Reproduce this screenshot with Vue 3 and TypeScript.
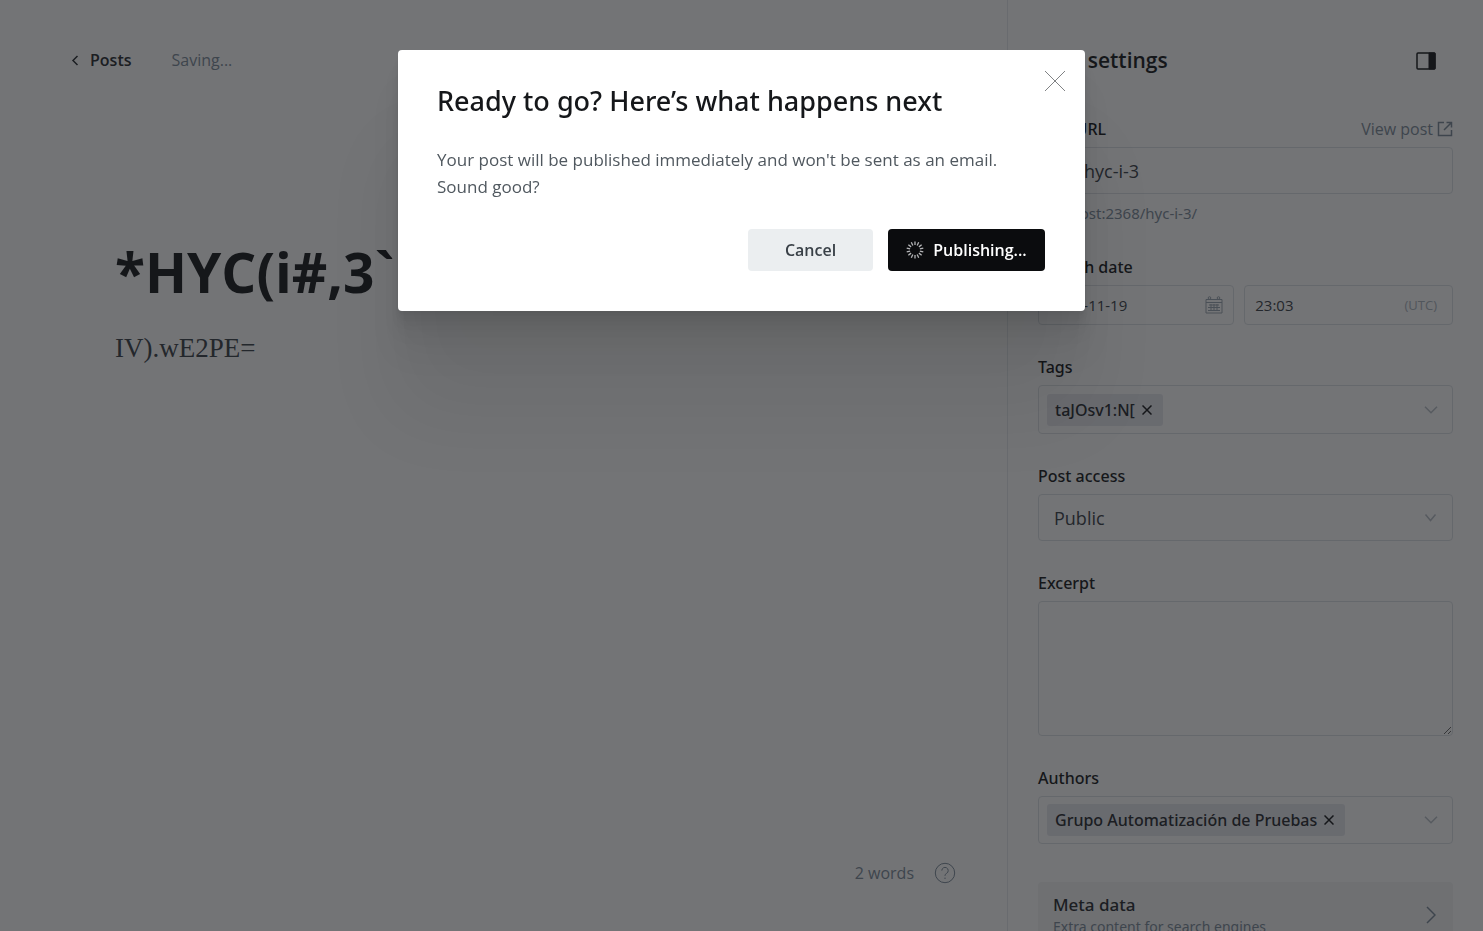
<script setup lang="ts">
import { ref } from 'vue'

const slug = ref('hyc-i-3')
const date = ref('2023-11-19')
const time = ref('23:03')
const access = ref('Public')
const excerpt = ref('')
const tags = ref<string[]>(['taJOsv1:N['])
const authors = ref<string[]>(['Grupo Automatización de Pruebas'])
const spokes = Array.from({ length: 14 }, (_, i) => (i * 360) / 14)
</script>

<template>
  <div class="app">
    <main class="editor">
      <header class="topbar">
        <a class="back" href="#">
          <svg width="8" height="12" viewBox="0 0 8 12"><path d="M6.500 2 2 6.500 6.500 11" /></svg>
          Posts
        </a>
        <span class="status">Saving...</span>
      </header>
      <article class="content">
        <h1>*HYC(i#,3`</h1>
        <p>IV).wE2PE=</p>
      </article>
      <footer class="bottombar">
        <span>2 words</span>
        <a href="#" aria-label="Help">
          <svg width="22" height="22" viewBox="0 0 22 22">
            <circle cx="11" cy="11" r="9.700" />
            <path d="M7.800 8.600a3.200 3.200 0 1 1 4.900 2.700c-1.100.7-1.700 1.200-1.700 2.500" />
            <path d="M11 15.600v1.400" />
          </svg>
        </a>
      </footer>
    </main>

    <aside class="settings">
      <div class="settings-head">
        <h2>Post settings</h2>
        <button type="button" class="icon-button" aria-label="Toggle settings">
          <svg width="20" height="18" viewBox="0 0 20 18">
            <rect x="1" y="1" width="18" height="16" rx="1" fill="none" stroke="#15171a" stroke-width="1.500" />
            <path d="M13 1h6v16h-6z" fill="#15171a" />
          </svg>
        </button>
      </div>

      <div class="group">
        <div class="label-row">
          <label for="slug">Post URL</label>
          <a class="view" href="#">
            View post
            <svg width="16" height="16" viewBox="0 0 16 16">
              <path d="M7 1.500H1.500v13h13V9" />
              <path d="M9.500 1.500h5v5M14.500 1.500 7 9" />
            </svg>
          </a>
        </div>
        <input id="slug" v-model="slug" class="box slug" type="text" />
        <p class="hint">localhost:2368/hyc-i-3/</p>
      </div>

      <div class="group">
        <label for="date">Publish date</label>
        <div class="date-row">
          <div class="box small date">
            <input id="date" v-model="date" type="text" />
            <svg width="18" height="18" viewBox="0 0 18 18">
              <path d="M1 3.500h16v13.500H1zM1 6.500h16M4 9h10M3 11.500h12M3 14.500h12M6 8v7M9 8v7M12 8v7" />
              <circle cx="4.500" cy="2" r="1.300" />
              <circle cx="13.500" cy="2" r="1.300" />
            </svg>
          </div>
          <div class="box small time">
            <input v-model="time" type="text" aria-label="Publish time" />
            <span class="utc">(UTC)</span>
          </div>
        </div>
      </div>

      <div class="group">
        <span class="label">Tags</span>
        <div class="box multi tall">
          <span v-for="tag in tags" :key="tag" class="token">
            {{ tag }}
            <button type="button" :aria-label="'Remove ' + tag">
              <svg width="10" height="10" viewBox="0 0 10 10"><path d="M.5.500l9 9M9.500.500l-9 9" /></svg>
            </button>
          </span>
          <svg class="chevron" width="14" height="8" viewBox="0 0 14 8"><path d="M1 .8l6 6 6-6" /></svg>
        </div>
      </div>

      <div class="group">
        <label for="access">Post access</label>
        <div class="box select">
          <select id="access" v-model="access">
            <option>Public</option>
          </select>
          <svg class="chevron" width="14" height="8" viewBox="0 0 14 8"><path d="M1.500.500l5 6 5-6" /></svg>
        </div>
      </div>

      <div class="group">
        <label for="excerpt">Excerpt</label>
        <textarea id="excerpt" v-model="excerpt" class="box"></textarea>
      </div>

      <div class="group">
        <span class="label">Authors</span>
        <div class="box multi">
          <span v-for="author in authors" :key="author" class="token">
            {{ author }}
            <button type="button" :aria-label="'Remove ' + author">
              <svg width="10" height="10" viewBox="0 0 10 10"><path d="M.5.500l9 9M9.500.500l-9 9" /></svg>
            </button>
          </span>
          <svg class="chevron" width="14" height="8" viewBox="0 0 14 8"><path d="M1 .8l6 6 6-6" /></svg>
        </div>
      </div>

      <button type="button" class="meta">
        <span class="meta-text">
          <b>Meta data</b>
          <span>Extra content for search engines</span>
        </span>
        <svg width="10" height="18" viewBox="0 0 10 18"><path d="M1 1l8 8-8 8" /></svg>
      </button>
    </aside>

    <div class="overlay">
      <section class="modal" role="dialog" aria-modal="true" aria-labelledby="modal-title">
        <button type="button" class="close" aria-label="Close">
          <svg width="22" height="22" viewBox="0 0 22 22"><path d="M1 1l20 20M21 1 1 21" /></svg>
        </button>
        <h2 id="modal-title">Ready to go? Here’s what happens next</h2>
        <p>Your post will be published immediately and won't be sent as an email. Sound good?</p>
        <div class="actions">
          <button type="button" class="cancel">Cancel</button>
          <button type="button" class="publish">
            <svg width="18" height="18" viewBox="-9 -9 18 18">
              <path v-for="angle in spokes" :key="angle" d="M0-5v-3.500" :transform="`rotate(${angle})`" />
            </svg>
            Publishing...
          </button>
        </div>
      </section>
    </div>
  </div>
</template>

<style>
body {
  margin: 0;
}
</style>

<style scoped>
.app {
  display: flex;
  height: 100vh;
  overflow: hidden;
  background: #fff;
  color: #15171a;
  font-family: 'Open Sans', 'Noto Sans', sans-serif;
}

.app *,
.app *::before {
  box-sizing: border-box;
}

h1,
h2,
p {
  margin: 0;
}

a {
  color: inherit;
  text-decoration: none;
}

button,
input,
select,
textarea {
  margin: 0;
  padding: 0;
  border: 0;
  outline: 0;
  background: none;
  color: inherit;
  font: inherit;
}

svg {
  flex: none;
  fill: none;
  stroke: currentColor;
}

.editor {
  display: flex;
  flex: 1;
  flex-direction: column;
  min-width: 0;
}

.topbar {
  display: flex;
  align-items: center;
  gap: 40px;
  padding: 48px 71px 0;
  font-size: 16px;
  line-height: 24px;
}

.back {
  display: flex;
  align-items: center;
  gap: 11px;
  color: #26292e;
  font-weight: 600;
}

.back svg {
  stroke-width: 1.5;
}

.status {
  color: #7c8b9a;
}

.content {
  flex: 1;
  padding: 161px 115px 0;
}

.content h1 {
  font-size: 55px;
  font-weight: 700;
  line-height: 78px;
}

.content p {
  margin-top: 21px;
  color: #394047;
  font-family: 'Liberation Serif', serif;
  font-size: 27px;
  line-height: 32px;
}

.bottombar {
  display: flex;
  align-items: center;
  justify-content: flex-end;
  gap: 20px;
  padding: 0 51px 46px;
  color: #7c8b9a;
  font-size: 16px;
  line-height: 24px;
}

.bottombar a {
  display: flex;
}

.settings {
  flex: none;
  width: 476px;
  padding: 0 30px;
  overflow: hidden;
  border-left: 1px solid #e5e9ed;
}

.settings-head {
  display: flex;
  align-items: center;
  justify-content: space-between;
  padding: 45px 17px 42px 0;
}

.settings-head h2 {
  font-size: 21px;
  font-weight: 600;
  line-height: 31px;
}

.icon-button {
  display: flex;
}

.group {
  margin-bottom: 31px;
}

.label-row {
  display: flex;
  justify-content: space-between;
}

label,
.label {
  display: block;
  margin-bottom: 7px;
  font-family: 'Noto Sans', sans-serif;
  font-size: 16px;
  font-weight: 500;
  line-height: 22px;
}

.view {
  display: flex;
  align-items: center;
  gap: 4px;
  height: 22px;
  color: #7c8b9a;
  font-size: 16px;
}

.view svg {
  stroke-width: 1.5;
}

.box {
  display: flex;
  align-items: center;
  width: 100%;
  border: 1px solid #dde1e5;
  border-radius: 4px;
  color: #394047;
}

.slug {
  height: 47px;
  padding-left: 45px;
  font-size: 18px;
}

.hint {
  margin-top: 7px;
  color: #7c8b9a;
  font-family: 'Noto Sans', sans-serif;
  font-size: 15px;
  line-height: 24px;
}

.date-row {
  display: flex;
  gap: 10px;
}

.small {
  min-width: 0;
  height: 40px;
  padding: 0 10px;
  font-size: 15px;
}

.small input {
  flex: 1;
  min-width: 0;
}

.small svg {
  color: #9aa5b1;
}

.date {
  flex: 195 1 0;
}

.time {
  flex: 209 1 0;
}

.time .utc {
  margin-right: 5px;
  color: #abb4be;
  font-size: 13px;
}

.multi {
  height: 48px;
  padding: 0 14px 0 8px;
}

.tall {
  height: 49px;
}

.token {
  display: flex;
  align-items: center;
  gap: 7px;
  height: 32px;
  padding: 0 11px 0 8px;
  border-radius: 3px;
  background: #e7e8ee;
  color: #26292e;
  font-family: 'Noto Sans', sans-serif;
  font-size: 16px;
  font-weight: 500;
}

.token button {
  display: flex;
  color: #15171a;
}

.token svg {
  stroke-width: 1.5;
}

.chevron {
  margin-left: auto;
  color: #b8bfc7;
  stroke-width: 1.5;
}

.select {
  position: relative;
  height: 47px;
  padding-right: 14px;
}

.select select {
  position: absolute;
  inset: 0;
  padding-left: 15px;
  appearance: none;
  font-size: 18px;
}

textarea.box {
  display: block;
  height: 135px;
  padding: 10px;
  resize: vertical;
}

.meta {
  display: flex;
  align-items: center;
  justify-content: space-between;
  width: 100%;
  margin-top: 38px;
  padding: 11px 17px 9px 15px;
  border-radius: 4px;
  background: #f4f5f6;
  color: #7c8b9a;
  text-align: left;
}

.meta-text {
  display: flex;
  flex-direction: column;
  font-family: 'Noto Sans', sans-serif;
  font-size: 14px;
  line-height: 20px;
}

.meta b {
  color: #26292e;
  font-size: 17px;
  font-weight: 500;
  line-height: 24px;
}

.meta svg {
  stroke-width: 1.5;
}

.overlay {
  position: fixed;
  inset: 0;
  padding-top: 50px;
  background: rgba(21, 23, 26, 0.6);
}

.modal {
  position: relative;
  width: 687px;
  max-width: 100%;
  margin: 0 auto;
  padding: 34px 40px 40px 39px;
  border-radius: 4px;
  background: #fff;
  box-shadow:
    0 3px 2px rgba(0, 0, 0, 0.02),
    0 7px 5px rgba(0, 0, 0, 0.03),
    0 13px 10px rgba(0, 0, 0, 0.035),
    0 22px 18px rgba(0, 0, 0, 0.042),
    0 42px 33px rgba(0, 0, 0, 0.05),
    0 100px 80px rgba(0, 0, 0, 0.07);
}

.modal h2 {
  font-family: 'Noto Sans', sans-serif;
  font-size: 27px;
  font-weight: 500;
  line-height: 34px;
}

.modal p {
  margin: 28px 0 29px;
  color: #50585f;
  font-size: 17px;
  line-height: 27px;
}

.close {
  position: absolute;
  top: 20px;
  right: 19px;
  display: flex;
  color: #808284;
}

.actions {
  display: flex;
  justify-content: flex-end;
  gap: 15px;
}

.actions button {
  display: flex;
  align-items: center;
  justify-content: center;
  height: 42px;
  border-radius: 4px;
  font-size: 16px;
  font-weight: 600;
}

.actions .cancel {
  width: 125px;
  background: #ebeef0;
  color: #394047;
}

.actions .publish {
  width: 157px;
  gap: 9px;
  background: #0b0c0e;
  color: #fff;
}

.publish svg {
  color: #b5b6b8;
  stroke-width: 1.3;
}
</style>
